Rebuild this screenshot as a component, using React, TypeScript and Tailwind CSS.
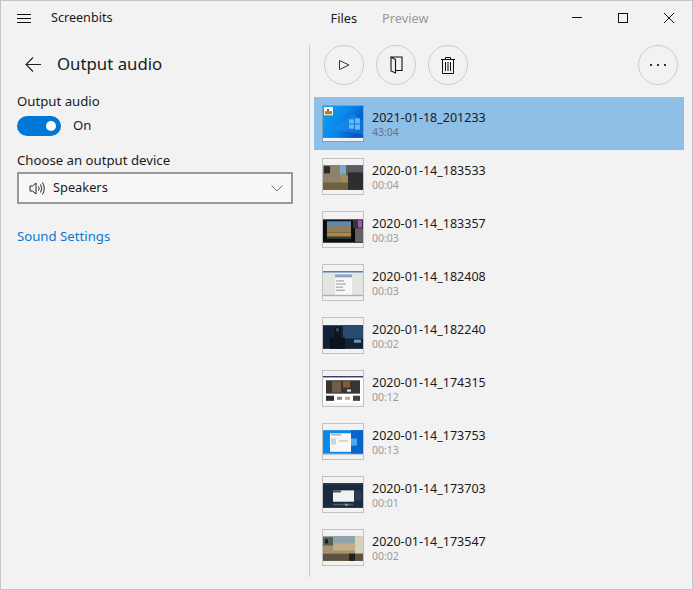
import React from "react";

const F = "font-['Noto_Sans',sans-serif]";

type Item = { name: string; dur: string; art: React.ReactNode };

const Desktop = (
  <>
    <defs>
      <linearGradient id="wall" x1="0" y1="0" x2="1" y2="0.5">
        <stop offset="0" stopColor="#08a4f4" />
        <stop offset="0.55" stopColor="#0a86ea" />
        <stop offset="1" stopColor="#0654c4" />
      </linearGradient>
    </defs>
    <rect width="40" height="34" fill="url(#wall)" />
    <path d="M10 22L30 8L40 14V28Z" fill="#2a9cf0" opacity="0.35" />
    <rect x="26" y="13" width="5" height="4" fill="#62bcf4" />
    <rect x="32" y="12" width="5" height="5" fill="#62bcf4" />
    <rect x="26" y="18" width="5" height="4" fill="#62bcf4" />
    <rect x="32" y="18" width="5" height="5" fill="#62bcf4" />
    <rect y="31" width="40" height="3" fill="#eef2f6" />
    <rect x="1" y="1" width="9" height="8" fill="#f8f6ee" />
    <rect x="2" y="5" width="7" height="3" fill="#b07c28" />
    <rect x="4" y="3" width="2" height="2" fill="#806030" />
  </>
);

const items: Item[] = [
  { name: "2021-01-18_201233", dur: "43:04", art: null },
  {
    name: "2020-01-14_183533",
    dur: "00:04",
    art: (
      <>
        <rect y="6" width="40" height="24" fill="#8a7550" />
        <rect y="6" width="18" height="17" fill="#8e826a" />
        <rect x="1" y="7" width="6" height="7" fill="#2a2a28" />
        <rect x="17" y="6" width="9" height="10" fill="#7ea8cc" />
        <rect x="18" y="14" width="8" height="9" fill="#a08a60" />
        <rect y="23" width="26" height="7" fill="#6e6040" />
        <rect x="23" y="6" width="17" height="10" fill="#585e64" />
        <rect x="25" y="13" width="15" height="17" fill="#2e2e2c" />
      </>
    ),
  },
  {
    name: "2020-01-14_183357",
    dur: "00:03",
    art: (
      <>
        <rect y="7" width="40" height="23" fill="#343434" />
        <rect x="0" y="8" width="30" height="21" fill="#0e0e0e" />
        <rect x="4" y="9" width="24" height="5" fill="#5f88b0" />
        <rect x="4" y="13" width="24" height="7" fill="#8c8060" />
        <rect x="4" y="20" width="24" height="4" fill="#b08a38" />
        <rect x="4" y="24" width="24" height="2" fill="#30404c" />
        <rect x="29" y="16" width="3" height="13" fill="#0a0a0a" />
        <rect x="35" y="8" width="4" height="7" fill="#9a58b8" />
        <rect x="32" y="16" width="8" height="13" fill="#626262" />
      </>
    ),
  },
  {
    name: "2020-01-14_182408",
    dur: "00:03",
    art: (
      <>
        <rect y="6" width="40" height="25" fill="#e4e4e2" />
        <rect y="6" width="40" height="1.2" fill="#3868b0" />
        <rect x="12" y="8" width="17" height="21" fill="#f8f8f8" />
        <rect x="12" y="9" width="17" height="3" fill="#88a4cc" />
        <rect x="13" y="15" width="8" height="1" fill="#999999" />
        <rect x="13" y="18" width="10" height="1" fill="#999999" />
        <rect x="13" y="21" width="7" height="1" fill="#999999" />
        <rect x="13" y="24" width="9" height="1" fill="#999999" />
        <rect y="29" width="40" height="1" fill="#a8a8a8" />
      </>
    ),
  },
  {
    name: "2020-01-14_182240",
    dur: "00:02",
    art: (
      <>
        <rect y="7" width="40" height="23" fill="#112238" />
        <rect x="20" y="7" width="20" height="13" fill="#2a4a70" />
        <rect x="7" y="19" width="15" height="11" fill="#0a1420" />
        <rect x="11" y="9" width="7" height="14" fill="#0c1622" />
        <rect x="13" y="10" width="3" height="3" fill="#39465a" />
        <rect x="31" y="21" width="7" height="3" fill="#7a94ae" />
      </>
    ),
  },
  {
    name: "2020-01-14_174315",
    dur: "00:12",
    art: (
      <>
        <rect y="6" width="40" height="25" fill="#ffffff" />
        <rect y="5" width="40" height="1.2" fill="#1c2050" />
        <rect x="3" y="9" width="34" height="13" fill="#3a3430" />
        <rect x="9" y="10" width="9" height="11" fill="#6c6048" />
        <rect x="20" y="10" width="7" height="6" fill="#8a5a40" />
        <rect x="24" y="18" width="4" height="2" fill="#e8e8e8" />
        <rect x="3" y="24" width="8" height="5" fill="#2c2c2c" />
        <rect x="14" y="25" width="5" height="3" fill="#888888" />
        <rect x="22" y="25" width="5" height="3" fill="#d0a890" />
        <rect x="30" y="24" width="7" height="5" fill="#404040" />
      </>
    ),
  },
  {
    name: "2020-01-14_173753",
    dur: "00:13",
    art: (
      <>
        <rect y="6" width="40" height="23" fill="#0a8ae8" />
        <rect x="28" y="6" width="12" height="23" fill="#0766cc" />
        <rect x="28" y="14" width="6" height="7" fill="#4ea8ee" />
        <rect x="7" y="9" width="21" height="18" fill="#f6f8fa" />
        <rect x="8" y="10" width="10" height="1" fill="#8899aa" />
        <rect x="8" y="14" width="5" height="6" fill="#c8d4dc" />
        <rect x="16" y="16" width="9" height="1" fill="#c0b890" />
        <rect y="29" width="40" height="1.2" fill="#c8ccd0" />
      </>
    ),
  },
  {
    name: "2020-01-14_173703",
    dur: "00:01",
    art: (
      <>
        <rect y="7" width="40" height="23" fill="#19293e" />
        <rect y="6" width="40" height="1.2" fill="#0c1220" />
        <rect x="10" y="13" width="21" height="11" fill="#f2f2f2" />
        <rect x="10" y="13" width="8" height="2" fill="#404a58" />
        <rect x="31" y="13" width="7" height="10" fill="#2c3c50" />
        <rect x="10" y="26" width="20" height="1.5" fill="#506070" />
        <rect x="22" y="26" width="3" height="2" fill="#90a838" />
      </>
    ),
  },
  {
    name: "2020-01-14_173547",
    dur: "00:02",
    art: (
      <>
        <rect y="6" width="40" height="24" fill="#a8926c" />
        <rect y="6" width="34" height="7" fill="#8ea4ac" />
        <rect y="7" width="10" height="8" fill="#5a5e58" />
        <rect x="2" y="9" width="3" height="4" fill="#1e1e1e" />
        <rect x="10" y="13" width="22" height="7" fill="#c0ae8a" />
        <rect x="32" y="6" width="8" height="17" fill="#d6d0c0" />
        <rect y="23" width="40" height="7" fill="#5e5140" />
        <rect x="26" y="23" width="6" height="7" fill="#1e1e24" />
      </>
    ),
  },
];

function CircleBtn({ children }: { children: React.ReactNode }) {
  return (
    <div className="flex h-10 w-10 items-center justify-center rounded-full border border-[#cccccc]">
      {children}
    </div>
  );
}

function Row({ item, selected }: { item: Item; selected: boolean }) {
  return (
    <div className={`flex h-[53px] items-center pl-2 ${selected ? "bg-[#8fbee6]" : ""}`}>
      <div
        className={`h-[37px] w-[42px] shrink-0 overflow-hidden border-[1.5px] ${
          selected ? "border-[#7fa0bc] bg-white" : "border-[#c2c2c2] bg-[#f2f2f2]"
        }`}
      >
        <svg viewBox="0 0 40 34" preserveAspectRatio="none" className="block h-full w-full blur-[0.4px]">
          {selected ? Desktop : item.art}
        </svg>
      </div>
      <div className="ml-2 flex flex-col">
        <span className="text-[12.5px] leading-[17px] text-[#1a1a1a]">{item.name}</span>
        <span className={`text-[10.5px] leading-[13px] ${selected ? "text-[#5e7488]" : "text-[#9a9a9a]"}`}>
          {item.dur}
        </span>
      </div>
    </div>
  );
}

export default function App() {
  return (
    <div className={`${F} flex h-[590px] w-[693px] flex-col border border-[#c4c4c4] bg-[#f2f2f2] text-[#1a1a1a]`}>
      <header className="flex h-[35px] shrink-0 items-center">
        <svg width="14" height="9" viewBox="0 0 14 9" className="ml-4" stroke="#111" strokeWidth="1">
          <path d="M0 .5H14M0 4.5H14M0 8.5H14" />
        </svg>
        <span className="ml-5 text-[12.6px]">Screenbits</span>
        <div className="ml-[218px] flex gap-[25px] text-[12.8px]">
          <span>Files</span>
          <span className="text-[#999999]">Preview</span>
        </div>
        <div className="ml-auto -mt-[2px] flex items-center gap-[36px] pr-[18px]">
          <svg width="10" height="10" viewBox="0 0 10 10" stroke="#111" strokeWidth="1" fill="none">
            <path d="M0 4.5H10" />
          </svg>
          <svg width="10" height="10" viewBox="0 0 10 10" stroke="#111" strokeWidth="1" fill="none">
            <rect x=".5" y=".5" width="9" height="9" />
          </svg>
          <svg width="10" height="10" viewBox="0 0 10 10" stroke="#111" strokeWidth="1" fill="none">
            <path d="M0 0L10 10M10 0L0 10" />
          </svg>
        </div>
      </header>

      <div className="flex min-h-0 flex-1 pt-[9px] pb-3">
        <aside className="w-[309px] shrink-0 border-r border-[#c8c8c8]">
          <div className="flex h-[38px] items-center pl-6">
            <svg width="16" height="15" viewBox="0 0 16 15" stroke="#222" strokeWidth="1.1" fill="none">
              <path d="M16 7.5H1M8 .5L1 7.5L8 14.5" />
            </svg>
            <span className="ml-4 text-[16.8px]">Output audio</span>
          </div>
          <div className="mt-[9px] pl-4 text-[13.2px]">
            <div className="leading-[18px]">Output audio</div>
            <div className="mt-[6px] flex items-center">
              <div className="flex h-5 w-11 items-center justify-end rounded-full bg-[#0078d7] pr-[5px]">
                <div className="h-[10px] w-[10px] rounded-full bg-white" />
              </div>
              <span className="ml-3">On</span>
            </div>
            <div className="mt-[15px] leading-[18px]">Choose an output device</div>
            <div className="mt-[3px] flex h-8 w-[276px] items-center border-2 border-[#999999] bg-[#f7f7f7] pl-[10px] pr-[8px]">
              <svg width="17" height="15" viewBox="0 0 17 15" stroke="#222" strokeWidth="1" fill="none">
                <path d="M1 5H3.5L7 2V13L3.5 10H1ZM9.5 5.5Q10.8 7.5 9.5 9.5M11.5 3.5Q14 7.5 11.5 11.5M13.5 1.5Q17 7.5 13.5 13.5" />
              </svg>
              <span className="ml-[7px] text-[12.8px]">Speakers</span>
              <svg width="12" height="7" viewBox="0 0 12 7" stroke="#777" strokeWidth="1" fill="none" className="ml-auto">
                <path d="M.5.5L6 6L11.5.5" />
              </svg>
            </div>
            <div className="mt-[23px] text-[#0a78d4]">Sound Settings</div>
          </div>
        </aside>

        <main className="min-w-0 flex-1 pl-1 pr-2">
          <div className="flex h-[42px] items-start pl-[10px]">
            <div className="flex gap-3">
              <CircleBtn>
                <svg width="11" height="10" viewBox="0 0 11 10" stroke="#333" strokeWidth="1" fill="none">
                  <path d="M.5.5L10 5L.5 9.5Z" />
                </svg>
              </CircleBtn>
              <CircleBtn>
                <svg width="13" height="18" viewBox="0 0 13 18" stroke="#111" strokeWidth="1.1" fill="none">
                  <path d="M1 1H12V14.5H5.5M1 1V15L5.5 17V3.5L1 1Z" />
                </svg>
              </CircleBtn>
              <CircleBtn>
                <svg width="14" height="17" viewBox="0 0 14 17" stroke="#111" strokeWidth="1" fill="none">
                  <path d="M0 2.5H14M4.5 2.5V.5H9.5V2.5M1.5 2.5V16.5H12.5V2.5M4.5 5V14M7 5V14M9.5 5V14" />
                </svg>
              </CircleBtn>
            </div>
            <div className="ml-auto mr-[6px]">
              <CircleBtn>
                <svg width="16" height="2" viewBox="0 0 16 2" fill="#333">
                  <rect x="0" width="2" height="2" />
                  <rect x="7" width="2" height="2" />
                  <rect x="14" width="2" height="2" />
                </svg>
              </CircleBtn>
            </div>
          </div>
          <div className="mt-[10px]">
            {items.map((it, i) => (
              <Row key={it.name} item={it} selected={i === 0} />
            ))}
          </div>
        </main>
      </div>
    </div>
  );
}
